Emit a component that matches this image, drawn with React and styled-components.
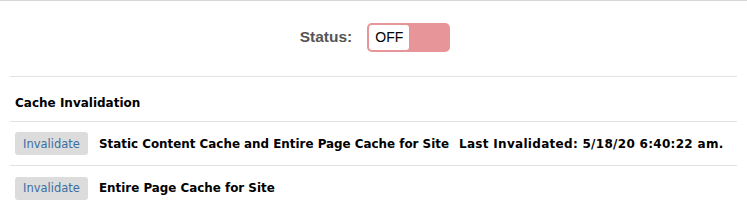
import React, { useState } from 'react';
import styled, { createGlobalStyle } from 'styled-components';

const GlobalStyle = createGlobalStyle`
  html, body {
    margin: 0;
    padding: 0;
    background: #fff;
  }
`;

const Page = styled.div`
  width: 747px;
  height: 219px;
  border-top: 1px solid #d6d6d6;
  box-sizing: border-box;
  padding: 0 10px;
  font-family: 'DejaVu Sans', Verdana, sans-serif;
`;

const StatusRow = styled.div`
  height: 76px;
  display: flex;
  align-items: center;
  justify-content: center;
  gap: 15px;
  padding: 0 0 3px 3px;
  box-sizing: border-box;
  border-bottom: 1px solid #e2e2e2;
`;

const StatusLabel = styled.span`
  font-family: 'Liberation Sans', Arial, sans-serif;
  font-weight: bold;
  font-size: 15.5px;
  color: #555;
`;

const Toggle = styled.button`
  width: 83px;
  height: 29px;
  padding: 2px;
  border: none;
  border-radius: 5px;
  background: ${p => (p.on ? '#7fc48a' : '#e8959a')};
  display: flex;
  justify-content: ${p => (p.on ? 'flex-end' : 'flex-start')};
  box-sizing: border-box;
  cursor: pointer;
`;

const Knob = styled.span`
  width: 40px;
  height: 25px;
  border-radius: 3px;
  background: #fff;
  display: flex;
  align-items: center;
  justify-content: center;
  font-family: 'Liberation Sans', Arial, sans-serif;
  font-size: 14px;
  color: #000;
`;

const SectionTitle = styled.div`
  height: 45px;
  display: flex;
  align-items: center;
  padding: 8px 0 0 5px;
  box-sizing: border-box;
  font-weight: bold;
  font-size: 12px;
  color: #000;
  border-bottom: 1px solid #e2e2e2;
`;

const Row = styled.div`
  height: 44px;
  display: flex;
  align-items: center;
  gap: 11px;
  padding-left: 5px;
  box-sizing: border-box;
  border-bottom: ${p => (p.last ? 'none' : '1px solid #e2e2e2')};
`;

const InvalidateButton = styled.button`
  width: 73px;
  height: 23px;
  border: none;
  border-radius: 3px;
  background: #dcdcdc;
  color: #3b6f9f;
  font-family: 'DejaVu Sans', Verdana, sans-serif;
  font-size: 11.5px;
  padding: 0;
  cursor: pointer;
`;

const RowText = styled.span`
  font-weight: bold;
  font-size: 11.9px;
  color: #000;
  white-space: nowrap;
`;

const LastInvalidated = styled(RowText)`
  font-size: 12px;
  letter-spacing: 0.3px;
  margin-left: -1px;
`;

const rows = [
  { label: 'Static Content Cache and Entire Page Cache for Site', last: 'Last Invalidated: 5/18/20 6:40:22 am.' },
  { label: 'Entire Page Cache for Site' },
];

export default function App() {
  const [on, setOn] = useState(false);
  return (
    <>
      <GlobalStyle />
      <Page>
        <StatusRow>
          <StatusLabel>Status:</StatusLabel>
          <Toggle on={on ? 1 : 0} onClick={() => setOn(!on)}>
            <Knob>{on ? 'ON' : 'OFF'}</Knob>
          </Toggle>
        </StatusRow>
        <SectionTitle>Cache Invalidation</SectionTitle>
        {rows.map((r, i) => (
          <Row key={r.label} last={i === rows.length - 1 ? 1 : 0}>
            <InvalidateButton>Invalidate</InvalidateButton>
            <RowText>{r.label}</RowText>
            {r.last && <LastInvalidated>{r.last}</LastInvalidated>}
          </Row>
        ))}
      </Page>
    </>
  );
}
